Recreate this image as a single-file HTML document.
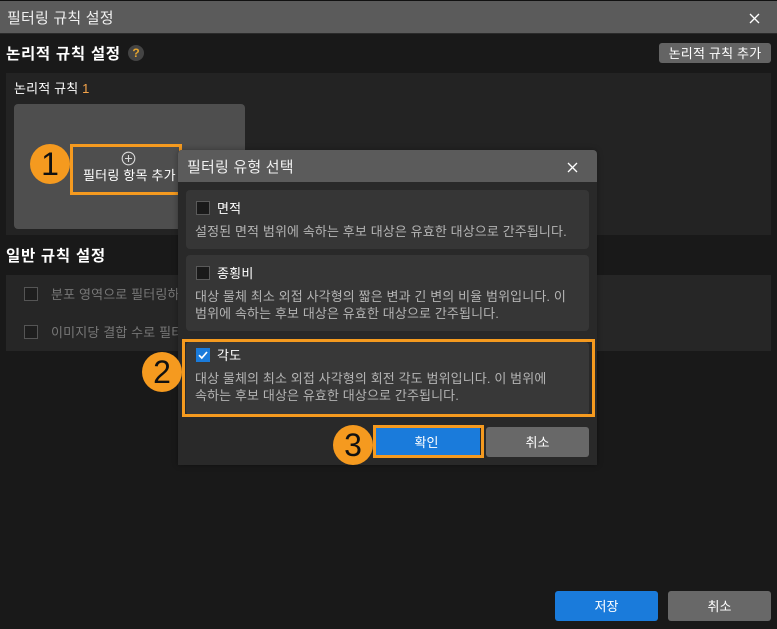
<!DOCTYPE html>
<html lang="ko">
<head>
<meta charset="utf-8">
<style>
html,body{margin:0;padding:0;background:#191919;}
#r{position:relative;width:777px;height:629px;overflow:hidden;background:#191919;font-family:"Liberation Sans","Noto Sans CJK KR",sans-serif;color:#fff;}
#r div{position:absolute;box-sizing:border-box;}
.t{white-space:nowrap;line-height:18px;}
.d{color:#b4b4b4;font-size:13px;letter-spacing:.12px;}
.c{border-radius:4px;background:#363636;}
.cb{width:14px;height:14px;background:#1a1a1a;border:1px solid #5a5a5a;}
.n{width:40px;height:40px;border-radius:50%;background:#f59a1f;color:#111;font-size:32px;line-height:40px;text-align:center;}
.o{border:3px solid #f59a1f;}
.b{border-radius:3px;text-align:center;font-size:13px;line-height:32px;}
</style>
</head>
<body>
<div id="r">
  <div style="left:0;top:0;width:777px;height:1px;background:#111"></div>
  <div style="left:0;top:1px;width:777px;height:32px;background:#5b5b5b"></div>
  <div style="left:0;top:33px;width:777px;height:1px;background:#2a2a2a"></div>
  <div class="t" style="left:7px;top:10px;font-size:15px;letter-spacing:.2px;color:#f0f0f0">필터링 규칙 설정</div>
  <svg style="position:absolute;left:749px;top:13px" width="11" height="11" viewBox="0 0 11 11"><path d="M1 1L10 10M10 1L1 10" stroke="#fff" stroke-width="1.3" fill="none"/></svg>

  <div class="t" style="left:6px;top:46px;font-size:15.5px;font-weight:bold;letter-spacing:.7px">논리적 규칙 설정</div>
  <div style="left:128px;top:45px;width:16px;height:16px;border-radius:50%;background:#444;color:#e5a52f;font-size:12px;font-weight:bold;line-height:16px;text-align:center">?</div>
  <div class="b" style="left:659px;top:43px;width:112px;height:20px;background:#646464;line-height:22px;letter-spacing:.2px">논리적 규칙 추가</div>

  <div style="left:6px;top:73px;width:765px;height:162px;background:#232323"></div>
  <div class="t" style="left:14px;top:80px;font-size:13px;letter-spacing:.15px">논리적 규칙 <span style="color:#f5a44a">1</span></div>
  <div style="left:14px;top:104px;width:231px;height:125px;background:#4e4e4e;border-radius:4px"></div>

  <svg style="position:absolute;left:121px;top:151px" width="15" height="15" viewBox="0 0 15 15"><circle cx="7.5" cy="7.5" r="6.3" stroke="#d8d8d8" stroke-width="1.1" fill="none"/><path d="M7.5 4v7M4 7.5h7" stroke="#d8d8d8" stroke-width="1.1"/></svg>
  <div class="t" style="left:83px;top:167px;font-size:13px;letter-spacing:.2px">필터링 항목 추가</div>
  <div class="o" style="left:70px;top:144px;width:112px;height:51px"></div>
  <div class="n" style="left:30px;top:144px">1</div>

  <div class="t" style="left:6px;top:248px;font-size:15.5px;font-weight:bold;letter-spacing:.7px">일반 규칙 설정</div>
  <div style="left:6px;top:275px;width:765px;height:76px;background:#262626"></div>
  <div class="cb" style="left:24px;top:287px;background:#1e1e1e;border-color:#555"></div>
  <div class="t" style="left:51px;top:286px;font-size:13px;letter-spacing:.15px;color:#777">분포 영역으로 필터링하기</div>
  <div class="cb" style="left:24px;top:325px;background:#1e1e1e;border-color:#555"></div>
  <div class="t" style="left:51px;top:324px;font-size:13px;letter-spacing:.15px;color:#777">이미지당 결합 수로 필터링</div>

  <div class="b" style="left:555px;top:591px;width:103px;height:30px;background:#1a7bdb">저장</div>
  <div class="b" style="left:668px;top:591px;width:103px;height:30px;background:#686868">취소</div>

  <!-- Dialog -->
  <div style="left:178px;top:150px;width:419px;height:315px;background:#292929;border-radius:4px 4px 0 0;box-shadow:0 0 6px rgba(0,0,0,.35)"></div>
  <div style="left:178px;top:150px;width:419px;height:32px;background:#5b5b5b;border-radius:4px 4px 0 0"></div>
  <div class="t" style="left:187px;top:159px;font-size:15px;letter-spacing:.2px;color:#f0f0f0">필터링 유형 선택</div>
  <svg style="position:absolute;left:567px;top:162px" width="11" height="11" viewBox="0 0 11 11"><path d="M1 1L10 10M10 1L1 10" stroke="#fff" stroke-width="1.3" fill="none"/></svg>

  <div class="c" style="left:186px;top:190px;width:403px;height:59px"></div>
  <div class="cb" style="left:196px;top:201px"></div>
  <div class="t" style="left:217px;top:200px;font-size:13px;letter-spacing:.2px">면적</div>
  <div class="t d" style="left:195px;top:223px">설정된 면적 범위에 속하는 후보 대상은 유효한 대상으로 간주됩니다.</div>

  <div class="c" style="left:186px;top:255px;width:403px;height:76px"></div>
  <div class="cb" style="left:196px;top:266px"></div>
  <div class="t" style="left:217px;top:265px;font-size:13px;letter-spacing:.2px">종횡비</div>
  <div class="t d" style="left:195px;top:288px">대상 물체 최소 외접 사각형의 짧은 변과 긴 변의 비율 범위입니다. 이</div>
  <div class="t d" style="left:195px;top:305px">범위에 속하는 후보 대상은 유효한 대상으로 간주됩니다.</div>

  <div class="c" style="left:186px;top:342px;width:403px;height:73px;background:#383838"></div>
  <div style="left:196px;top:348px;width:14px;height:14px;background:#1a7bdb"></div>
  <svg style="position:absolute;left:196px;top:348px" width="14" height="14" viewBox="0 0 14 14"><path d="M3 7.2L5.8 10L11 4" stroke="#fff" stroke-width="1.7" fill="none"/></svg>
  <div class="t" style="left:217px;top:347px;font-size:13px;letter-spacing:.2px">각도</div>
  <div class="t d" style="left:195px;top:370px">대상 물체의 최소 외접 사각형의 회전 각도 범위입니다. 이 범위에</div>
  <div class="t d" style="left:195px;top:387px">속하는 후보 대상은 유효한 대상으로 간주됩니다.</div>
  <div class="o" style="left:182px;top:339px;width:413px;height:78px"></div>
  <div class="n" style="left:142px;top:352px">2</div>

  <div class="b" style="left:373px;top:427px;width:107px;height:31px;background:#1a7bdb;border-radius:0;line-height:31px">확인</div>
  <div class="o" style="left:373px;top:425px;width:111px;height:33px"></div>
  <div class="b" style="left:486px;top:427px;width:103px;height:30px;background:#686868">취소</div>
  <div class="n" style="left:333px;top:425px">3</div>
</div>
</body>
</html>
